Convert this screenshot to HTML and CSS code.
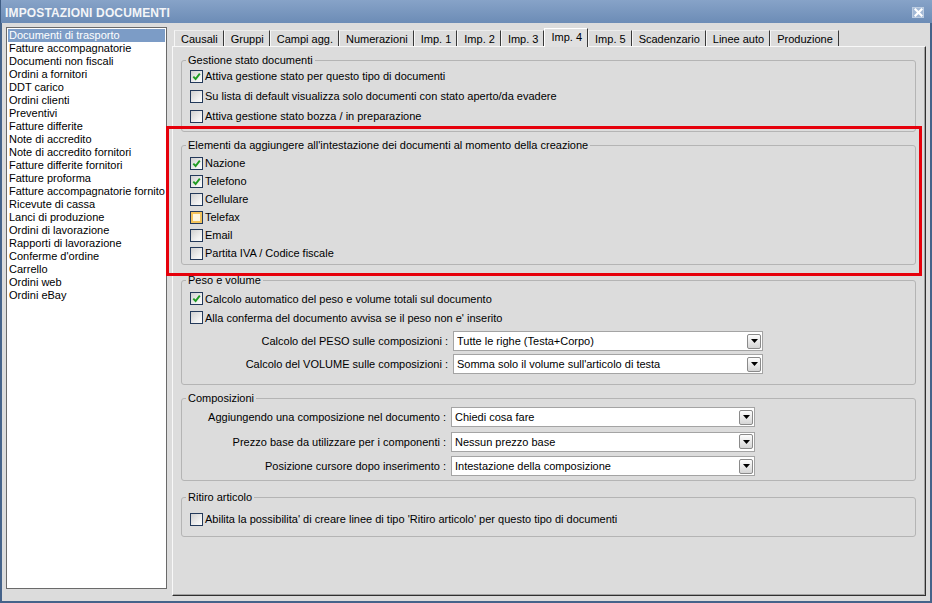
FILE: index.html
```html
<!DOCTYPE html>
<html lang="it">
<head>
<meta charset="utf-8">
<title>Impostazioni documenti</title>
<link rel="stylesheet" href="styles.css">
</head>
<body>
<div class="window">
  <div class="titlebar">
    <span class="title">IMPOSTAZIONI DOCUMENTI</span>
    <span class="close"><svg width="9" height="9" viewBox="0 0 9 9"><path d="M1.5 1.5 L7.5 7.5 M7.5 1.5 L1.5 7.5" stroke="#fff" stroke-width="2.2" stroke-linecap="square"/></svg></span>
  </div>
  <div class="body">
    <ul class="doclist">
      <li class="selected">Documenti di trasporto</li>
      <li>Fatture accompagnatorie</li>
      <li>Documenti non fiscali</li>
      <li>Ordini a fornitori</li>
      <li>DDT carico</li>
      <li>Ordini clienti</li>
      <li>Preventivi</li>
      <li>Fatture differite</li>
      <li>Note di accredito</li>
      <li>Note di accredito fornitori</li>
      <li>Fatture differite fornitori</li>
      <li>Fatture proforma</li>
      <li>Fatture accompagnatorie fornitori</li>
      <li>Ricevute di cassa</li>
      <li>Lanci di produzione</li>
      <li>Ordini di lavorazione</li>
      <li>Rapporti di lavorazione</li>
      <li>Conferme d'ordine</li>
      <li>Carrello</li>
      <li>Ordini web</li>
      <li>Ordini eBay</li>
    </ul>
    <div class="tabs">
      <div class="tabstrip">
        <span class="tab">Causali</span>
        <span class="tab">Gruppi</span>
        <span class="tab">Campi agg.</span>
        <span class="tab">Numerazioni</span>
        <span class="tab">Imp. 1</span>
        <span class="tab">Imp. 2</span>
        <span class="tab">Imp. 3</span>
        <span class="tab active">Imp. 4</span>
        <span class="tab">Imp. 5</span>
        <span class="tab">Scadenzario</span>
        <span class="tab">Linee auto</span>
        <span class="tab">Produzione</span>
      </div>
      <div class="panel">
        <fieldset class="group g-stato">
          <legend>Gestione stato documenti</legend>
          <div class="check-row"><span class="cb"><svg class="tick" width="9" height="9" viewBox="0 0 9 9"><path d="M1.3 4.6 L3.6 7 L7.8 1.6" fill="none" stroke="#1f9b22" stroke-width="1.9"/></svg></span>Attiva gestione stato per questo tipo di documenti</div>
          <div class="check-row"><span class="cb"></span>Su lista di default visualizza solo documenti con stato aperto/da evadere</div>
          <div class="check-row"><span class="cb"></span>Attiva gestione stato bozza / in preparazione</div>
        </fieldset>

        <fieldset class="group g-elementi">
          <legend>Elementi da aggiungere all'intestazione dei documenti al momento della creazione</legend>
          <div class="check-row"><span class="cb"><svg class="tick" width="9" height="9" viewBox="0 0 9 9"><path d="M1.3 4.6 L3.6 7 L7.8 1.6" fill="none" stroke="#1f9b22" stroke-width="1.9"/></svg></span>Nazione</div>
          <div class="check-row"><span class="cb"><svg class="tick" width="9" height="9" viewBox="0 0 9 9"><path d="M1.3 4.6 L3.6 7 L7.8 1.6" fill="none" stroke="#1f9b22" stroke-width="1.9"/></svg></span>Telefono</div>
          <div class="check-row"><span class="cb"></span>Cellulare</div>
          <div class="check-row"><span class="cb hot"></span>Telefax</div>
          <div class="check-row"><span class="cb"></span>Email</div>
          <div class="check-row"><span class="cb"></span>Partita IVA / Codice fiscale</div>
        </fieldset>

        <fieldset class="group g-peso">
          <legend>Peso e volume</legend>
          <div class="check-row"><span class="cb"><svg class="tick" width="9" height="9" viewBox="0 0 9 9"><path d="M1.3 4.6 L3.6 7 L7.8 1.6" fill="none" stroke="#1f9b22" stroke-width="1.9"/></svg></span>Calcolo automatico del peso e volume totali sul documento</div>
          <div class="check-row"><span class="cb"></span>Alla conferma del documento avvisa se il peso non e' inserito</div>
          <div class="select-grid">
            <span class="field-label">Calcolo del PESO sulle composizioni :</span>
            <span class="combo"><span class="combo-text">Tutte le righe (Testa+Corpo)</span><span class="combo-btn"><svg width="7" height="4" viewBox="0 0 7 4"><path d="M0 0 H7 L3.5 4 Z" fill="#000"/></svg></span></span>
            <span class="field-label">Calcolo del VOLUME sulle composizioni :</span>
            <span class="combo"><span class="combo-text">Somma solo il volume sull'articolo di testa</span><span class="combo-btn"><svg width="7" height="4" viewBox="0 0 7 4"><path d="M0 0 H7 L3.5 4 Z" fill="#000"/></svg></span></span>
          </div>
        </fieldset>

        <fieldset class="group g-comp">
          <legend>Composizioni</legend>
          <div class="select-grid">
            <span class="field-label">Aggiungendo una composizione nel documento :</span>
            <span class="combo"><span class="combo-text">Chiedi cosa fare</span><span class="combo-btn"><svg width="7" height="4" viewBox="0 0 7 4"><path d="M0 0 H7 L3.5 4 Z" fill="#000"/></svg></span></span>
            <span class="field-label">Prezzo base da utilizzare per i componenti :</span>
            <span class="combo"><span class="combo-text">Nessun prezzo base</span><span class="combo-btn"><svg width="7" height="4" viewBox="0 0 7 4"><path d="M0 0 H7 L3.5 4 Z" fill="#000"/></svg></span></span>
            <span class="field-label">Posizione cursore dopo inserimento :</span>
            <span class="combo"><span class="combo-text">Intestazione della composizione</span><span class="combo-btn"><svg width="7" height="4" viewBox="0 0 7 4"><path d="M0 0 H7 L3.5 4 Z" fill="#000"/></svg></span></span>
          </div>
        </fieldset>

        <fieldset class="group g-ritiro">
          <legend>Ritiro articolo</legend>
          <div class="check-row"><span class="cb"></span>Abilita la possibilita' di creare linee di tipo 'Ritiro articolo' per questo tipo di documenti</div>
        </fieldset>
      </div>
    </div>
  </div>
  <div class="annotation"></div>
</div>
</body>
</html>
```
FILE: styles.css
```css
* { box-sizing: border-box; }
html, body { margin: 0; padding: 0; }
body {
  width: 932px;
  height: 603px;
  overflow: hidden;
  font-family: "Liberation Sans", Arial, sans-serif;
  font-size: 11px;
  color: #000;
  background: #dcdcdc;
}

.window {
  position: relative;
  width: 932px;
  height: 603px;
  background: #dcdcdc;
  border: 2px solid #45638a;
  border-top: 0;
  display: flex;
  flex-direction: column;
}

.titlebar {
  height: 23px;
  margin: 0 -2px;
  padding: 2px 8px 0 4px;
  background: linear-gradient(#87a3c8, #6c8cb6);
  border-left: 1px solid #3f5d84;
  display: flex;
  align-items: center;
  justify-content: space-between;
  flex: none;
}
.title {
  font-weight: bold;
  font-size: 12px;
  color: #f3f5f8;
  letter-spacing: 0.15px;
}
.close {
  width: 12px;
  height: 11px;
  margin-top: -1px;
  background: #a3b9d6;
  border: 1px solid #bccce1;
  display: flex;
  align-items: center;
  justify-content: center;
}

.body {
  display: flex;
  align-items: flex-start;
  padding: 4px 4px 0 4px;
  flex: 1;
}

.doclist {
  list-style: none;
  margin: 0;
  padding: 1px;
  width: 161px;
  height: 562px;
  background: #fff;
  border: 1px solid #6a6a6a;
  overflow: hidden;
  flex: none;
}
.doclist li {
  height: 13px;
  line-height: 13px;
  padding-left: 1px;
  white-space: nowrap;
  overflow: hidden;
}
.doclist li.selected {
  background: #7c9cc6;
  color: #fff;
}

.tabs {
  margin-left: 5px;
  margin-top: 1px;
  width: 754px;
  display: flex;
  flex-direction: column;
}
.tabstrip {
  height: 18px;
  padding-left: 2px;
  display: flex;
  align-items: flex-end;
  position: relative;
  z-index: 1;
}
.tab {
  height: 16px;
  line-height: 15px;
  padding: 1px 5px 0 6px;
  background: #dcdcdc;
  border-top: 1px solid #eeeeee;
  border-left: 1px solid #f6f6f6;
  border-right: 1px solid #383838;
  white-space: nowrap;
}
.tab.active {
  height: 19px;
  line-height: 17px;
  padding-top: 0;
  margin-bottom: -1px;
  background: #e0e0e0;
  border-top-color: #ffffff;
  border-left-color: #ffffff;
}

.panel {
  height: 550px;
  background: #dcdcdc;
  border: 1px solid;
  border-color: #f8f8f8 #303030 #303030 #f8f8f8;
  box-shadow: inset -1px -1px 0 #a2a2a2;
  padding: 7px 9px 0 8px;
  display: flex;
  flex-direction: column;
}

.group {
  margin: 0;
  padding: 0;
  min-width: 0;
  border: 1px solid #b4b4b4;
  border-radius: 3px;
}
.group legend {
  margin-left: 4px;
  padding: 0 2px;
  height: 12px;
  line-height: 12px;
}

.check-row {
  display: flex;
  align-items: center;
  gap: 2px;
  padding-left: 8px;
  white-space: nowrap;
}
.cb {
  width: 13px;
  height: 13px;
  flex: none;
  border: 1px solid #23395a;
  background: linear-gradient(135deg, #d0d0d0 0%, #f2f2f2 70%, #fbfbfb 100%);
  display: flex;
  align-items: center;
  justify-content: center;
}
.cb.hot {
  background: #fdf6df;
  box-shadow: inset 0 0 0 2px #f3c35b;
}

.g-stato { padding-bottom: 5px; }
.g-stato .check-row { height: 20px; }
.g-stato .check-row:first-of-type { height: 20px; }

.g-elementi { margin-top: 7px; padding: 3px 0 2px; }
.g-elementi .check-row { height: 18px; }

.g-peso { margin-top: 9px; padding: 3px 0 10px; }
.g-peso .check-row { height: 19px; }
.g-peso .select-grid {
  margin-top: 4px;
  grid-template-columns: 266px 310px;
  row-gap: 3px;
}

.g-comp { margin-top: 7px; padding: 3px 0 4px; }
.g-comp .select-grid {
  grid-template-columns: 264px 304px;
  row-gap: 4.5px;
}

.g-ritiro { margin-top: 10px; padding: 6px 0 7px; }
.g-ritiro .check-row { height: 20px; }

.select-grid {
  display: grid;
  column-gap: 5px;
  align-items: center;
}
.field-label {
  text-align: right;
  white-space: nowrap;
}
.combo {
  height: 20px;
  background: #fff;
  border: 1px solid #a4a4a4;
  display: flex;
  align-items: center;
  padding-left: 3px;
}
.combo-text {
  flex: 1;
  white-space: nowrap;
  overflow: hidden;
}
.combo-btn {
  width: 14px;
  height: 15px;
  margin-right: 1px;
  border: 1px solid #8a8a8a;
  border-radius: 2px;
  background: linear-gradient(#fdfdfd, #d5d5d5);
  display: flex;
  align-items: center;
  justify-content: center;
}

.annotation {
  position: absolute;
  left: 164px;
  top: 126px;
  width: 756px;
  height: 150px;
  border: 3px solid #e6000b;
  pointer-events: none;
}
```
